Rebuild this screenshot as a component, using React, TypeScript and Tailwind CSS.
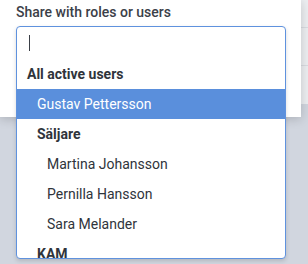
import React from 'react';

type Row = { label: string; kind: 'group' | 'option'; depth: number; active?: boolean };

const rows: Row[] = [
  { label: 'All active users', kind: 'group', depth: 0 },
  { label: 'Gustav Pettersson', kind: 'option', depth: 1, active: true },
  { label: 'Säljare', kind: 'group', depth: 1 },
  { label: 'Martina Johansson', kind: 'option', depth: 2 },
  { label: 'Pernilla Hansson', kind: 'option', depth: 2 },
  { label: 'Sara Melander', kind: 'option', depth: 2 },
  { label: 'KAM', kind: 'group', depth: 1 },
];

const pad = ['pl-[10px]', 'pl-[20px]', 'pl-[30px]'];

export default function App() {
  return (
    <div className="relative w-[308px] h-[264px] overflow-hidden bg-[#d1d6df] font-['Roboto',sans-serif]">
      {/* page behind the dialog */}
      <div className="absolute right-0 top-0 w-[10px] h-[104px] bg-[#eceef1] flex flex-col">
        <div className="h-[28px] border-b border-[#d9dce1]" />
        <div className="h-[38px] border-b border-[#d9dce1]" />
      </div>

      {/* dialog */}
      <div className="absolute left-0 top-0 w-[301px] h-[117px] bg-white shadow-[0_2px_10px_rgba(0,0,0,0.18)] px-4 pt-[2px]">
        <div className="text-[14px] leading-[20px] font-medium text-[#3b4048]">Share with roles or users</div>

        <div className="mt-[4px] w-[270px] h-[233px] border border-[#5f92de] rounded-[4px] bg-white overflow-hidden shadow-[0_2px_4px_rgba(0,0,0,0.15)]">
          <div className="h-[32px] flex items-center pl-[12px]">
            <div className="w-px h-[16px] bg-[#3a3f46]" />
          </div>
          <div className="flex flex-col">
            {rows.map(r => (
              <div
                key={r.label}
                className={`h-[30px] flex items-center text-[14px] ${pad[r.depth]} ${
                  r.active ? 'bg-[#5a8fdc] text-white' : 'text-[#2f343b]'
                } ${r.kind === 'group' ? 'font-bold' : ''}`}
              >
                {r.label}
              </div>
            ))}
          </div>
        </div>
      </div>
    </div>
  );
}
